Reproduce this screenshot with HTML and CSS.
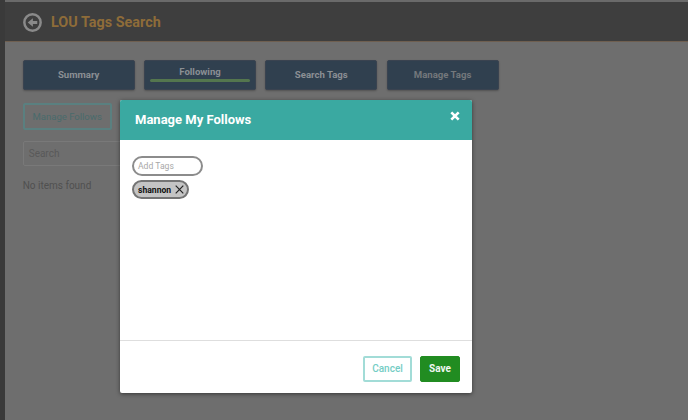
FILE: index.html
```html
<!DOCTYPE html>
<html lang="en">
<head>
<meta charset="utf-8">
<title>LOU Tags Search</title>
<link rel="stylesheet" href="styles.css">
</head>
<body>
<div class="rail"></div>
<div class="app">
  <header class="topbar">
    <svg class="back" width="19" height="19" viewBox="0 0 20 20" aria-hidden="true">
      <circle cx="10" cy="10" r="8.6" fill="none" stroke="#8a8a8a" stroke-width="2.6"/>
      <path d="M15 8.5H10.4V5.6L5 10l5.4 4.4v-2.9H15z" fill="#8a8a8a"/>
    </svg>
    <h1 class="title">LOU Tags Search</h1>
  </header>
  <main class="content">
    <nav class="tabs">
      <a class="tab">Summary</a>
      <a class="tab tab-active">Following</a>
      <a class="tab">Search Tags</a>
      <a class="tab">Manage Tags</a>
    </nav>
    <button class="manage">Manage Follows</button>
    <div class="search">Search</div>
    <p class="empty">No items found</p>
  </main>
</div>
<section class="modal">
  <div class="modal-head">
    <h2 class="modal-title">Manage My Follows</h2>
    <svg class="modal-close" width="10" height="10" viewBox="0 0 10 10" aria-hidden="true">
      <path d="M1.3 1.3l7.4 7.4M8.7 1.3L1.3 8.7" stroke="#fff" stroke-width="2.6" fill="none"/>
    </svg>
  </div>
  <div class="modal-body">
    <div class="tag-input">Add Tags</div>
    <div class="chip">
      <span>shannon</span>
      <svg width="9" height="9" viewBox="0 0 9 9" aria-hidden="true">
        <path d="M.7.7l7.6 7.6M8.3.7L.7 8.3" stroke="#222" stroke-width="1.2" fill="none"/>
      </svg>
    </div>
  </div>
  <div class="modal-foot">
    <button class="btn btn-cancel">Cancel</button>
    <button class="btn btn-save">Save</button>
  </div>
</section>
</body>
</html>
```
FILE: styles.css
```css
* { box-sizing: border-box; }
html, body { height: 100%; }
body {
  margin: 0;
  display: flex;
  height: 420px;
  overflow: hidden;
  background: #6e6e6e;
  font-family: Roboto, "Liberation Sans", sans-serif;
}
.rail { width: 5px; background: #3a3a3a; }
.app { flex: 1; border-top: 2px solid #6a6a6a; }
.topbar {
  height: 40px;
  display: flex;
  align-items: center;
  gap: 9px;
  padding: 1px 0 0 18px;
  background: #3e3e3e;
  border-bottom: 1px solid #6f5f50;
}
.back { flex: none; }
.title {
  margin: 0;
  font-size: 14.4px;
  font-weight: 700;
  color: #8e6c39;
}
.content { padding: 18px 18px 0 17.7px; }
.tabs { display: flex; gap: 9.3px; }
.tab {
  width: 112px;
  height: 30px;
  padding-bottom: 1px;
  display: flex;
  justify-content: center;
  align-items: center;
  background: #30404f;
  border: 1px solid #3a4350;
  border-radius: 2px;
  box-shadow: 0 1px 2px rgba(0,0,0,.25);
  font-size: 9.6px;
  font-weight: 700;
  color: #8b8f94;
}
.tab:last-child { color: #74787c; }
.tab-active {
  position: relative;
  padding-bottom: 7px;
}
.tab-active::after {
  content: "";
  position: absolute;
  left: 5px;
  right: 5px;
  bottom: 7px;
  height: 3px;
  border-radius: 2px;
  background: #54764e;
}
.manage {
  display: block;
  margin-top: 13px;
  width: 89px;
  height: 27px;
  padding: 0;
  background: transparent;
  border: 2px solid #5a8080;
  border-radius: 2px;
  font: 400 9.5px Roboto, sans-serif;
  color: #496b6c;
}
.search {
  margin-top: 11px;
  width: 100px;
  height: 25px;
  padding: 0 5px;
  line-height: 23px;
  border: 1px solid #797979;
  border-radius: 2px;
  font-size: 10px;
  color: #595959;
}
.empty {
  margin: 14px 0 0;
  font-size: 10px;
  color: #505050;
}
.modal {
  position: absolute;
  left: 120px;
  top: 100px;
  width: 352px;
  height: 293px;
  display: flex;
  flex-direction: column;
  background: #fff;
  border-radius: 2px;
  box-shadow: 0 1px 4px rgba(0,0,0,.5);
}
.modal-head {
  height: 40px;
  flex: none;
  display: flex;
  justify-content: space-between;
  align-items: flex-start;
  padding: 11px 12px 0 15px;
  background: #3aa9a1;
  border-radius: 2px 2px 0 0;
}
.modal-title {
  margin: 0;
  font-size: 13px;
  line-height: 17px;
  font-weight: 700;
  color: #fff;
}
.modal-body {
  flex: 1;
  padding: 16px 12px 0;
}
.tag-input {
  width: 71px;
  height: 20px;
  padding-left: 4px;
  line-height: 16px;
  border: 2px solid #8c8c8c;
  border-radius: 10px;
  font-size: 8.6px;
  color: #a8a8a8;
}
.chip {
  margin-top: 4px;
  width: 57px;
  height: 19px;
  display: flex;
  align-items: center;
  gap: 4px;
  padding-left: 4px;
  background: #c4c4c4;
  border: 2px solid #747474;
  border-radius: 10px;
  font-size: 8.6px;
  font-weight: 700;
  color: #111;
}
.modal-foot {
  flex: none;
  height: 53px;
  display: flex;
  justify-content: flex-end;
  gap: 8px;
  padding: 15px 12px 0 0;
  border-top: 1px solid #dedede;
}
.btn {
  height: 26px;
  padding: 0 0 1px;
  border-radius: 2px;
  font: 500 10px Roboto, sans-serif;
}
.btn-cancel {
  width: 49px;
  background: #fff;
  border: 2px solid #a2dcd7;
  color: #74cdc5;
}
.btn-save {
  width: 40px;
  background: #218c21;
  border: 1px solid #218c21;
  font-weight: 700;
  color: #f1f7f1;
}
```
